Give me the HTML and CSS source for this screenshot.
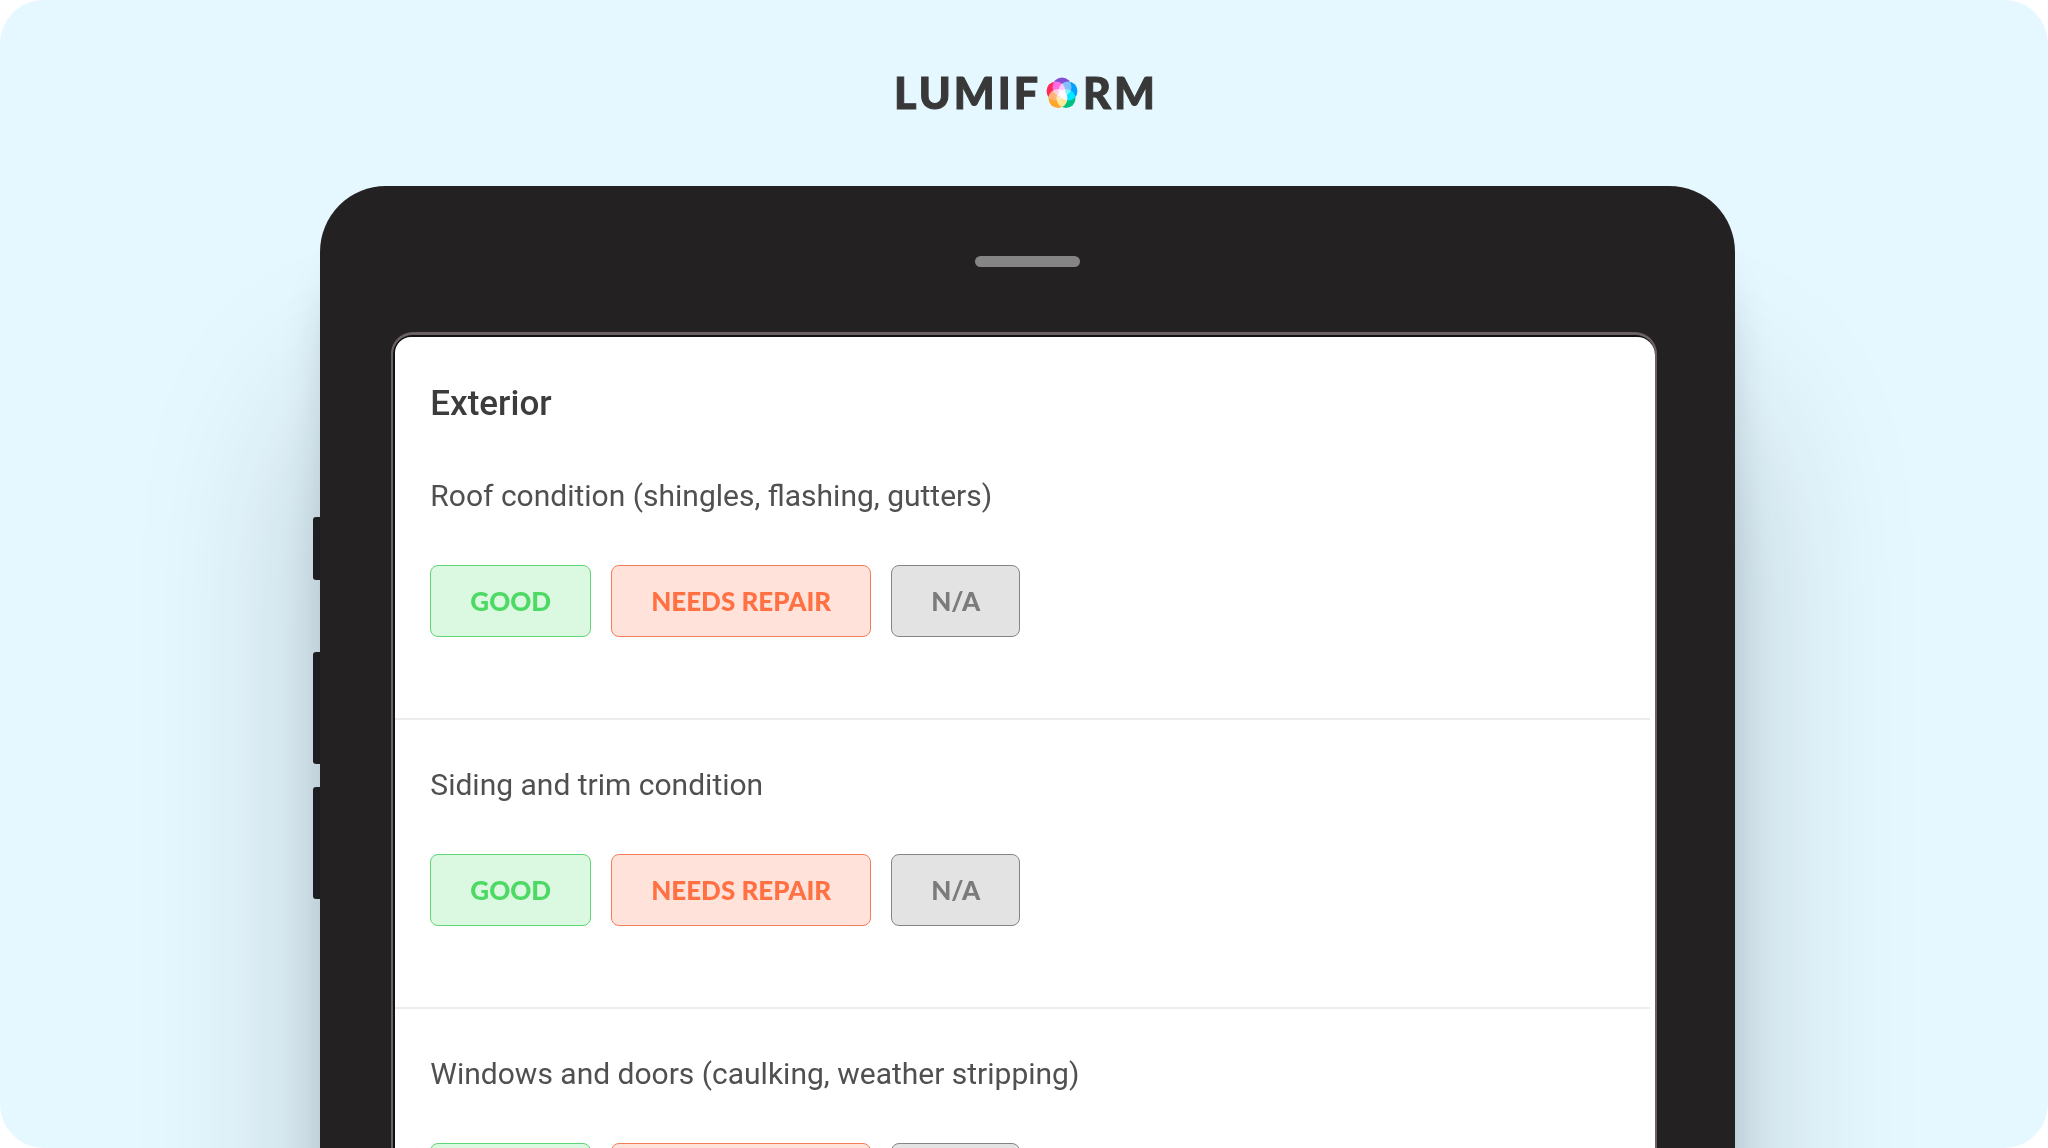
FILE: index.html
```html
<!DOCTYPE html>
<html lang="en">
<head>
<meta charset="utf-8">
<meta name="viewport" content="width=device-width, initial-scale=1">
<title>Lumiform</title>
<link rel="stylesheet" href="styles.css">
</head>
<body>
<div class="canvas">
  <header class="brand">
    <span class="brand-text">LUMIF</span>
    <svg class="brand-mark" viewBox="0 0 64 64" role="img" aria-label="O">
      <g class="petals">
        <circle cx="32" cy="20" r="19" fill="#8350d2"/>
        <circle cx="44" cy="28" r="19" fill="#00a2ff"/>
        <circle cx="40" cy="43" r="19" fill="#00c084"/>
        <circle cx="24" cy="43" r="19" fill="#ffa62b"/>
        <circle cx="20" cy="28" r="19" fill="#ff2a5c"/>
      </g>
    </svg>
    <span class="brand-text">RM</span>
  </header>
  <div class="device">
    <div class="keys">
      <span class="key key-short"></span>
      <span class="key key-volume-up"></span>
      <span class="key"></span>
    </div>
    <div class="tablet">
      <div class="speaker"></div>
      <main class="screen">
        <div class="sheet">
          <h1 class="title">Exterior</h1>
          <section class="item">
            <h2 class="question">Roof condition (shingles, flashing, gutters)</h2>
            <div class="answers">
              <button type="button" class="answer good">GOOD</button>
              <button type="button" class="answer repair">NEEDS REPAIR</button>
              <button type="button" class="answer na">N/A</button>
            </div>
          </section>
          <section class="item">
            <h2 class="question">Siding and trim condition</h2>
            <div class="answers">
              <button type="button" class="answer good">GOOD</button>
              <button type="button" class="answer repair">NEEDS REPAIR</button>
              <button type="button" class="answer na">N/A</button>
            </div>
          </section>
          <section class="item">
            <h2 class="question">Windows and doors (caulking, weather stripping)</h2>
            <div class="answers">
              <button type="button" class="answer good">GOOD</button>
              <button type="button" class="answer repair">NEEDS REPAIR</button>
              <button type="button" class="answer na">N/A</button>
            </div>
          </section>
        </div>
      </main>
    </div>
  </div>
</div>
</body>
</html>
```
FILE: styles.css
```css
* {
  box-sizing: border-box;
}

body {
  margin: 0;
  background: #fff;
  font-family: Roboto, "Liberation Sans", sans-serif;
  color: #3c3c3c;
}

.canvas {
  height: 100vh;
  overflow-x: hidden;
  overflow-y: auto;
  scrollbar-width: none;
  border-radius: 44px;
  background: #e6f8ff;
}

.brand {
  display: flex;
  justify-content: center;
  align-items: center;
  gap: 5px;
  height: 186px;
  padding: 0 0 1px 4px;
}

.brand-text {
  font-family: Lato, "Open Sans", sans-serif;
  font-size: 43px;
  font-weight: 900;
  line-height: 48px;
  letter-spacing: 3px;
  color: #383838;
  -webkit-text-stroke: 1px #383838;
}

.brand-mark {
  width: 32px;
  height: 32px;
}

.petals {
  isolation: isolate;
}

.petals circle {
  mix-blend-mode: screen;
}

.device {
  display: flex;
  width: 69.4%;
  margin: 0 auto;
}

.keys {
  display: flex;
  flex-direction: column;
  flex: 0 0 7px;
  gap: 23px;
  padding-top: 331px;
}

.key {
  height: 112px;
  border-radius: 3px 0 0 3px;
  background: #242122;
}

.key-short {
  height: 63px;
}

.key-volume-up {
  margin-top: 49px;
}

.tablet {
  flex: 1;
  padding: 70px 0 80px;
  border-radius: 66px 66px 0 0;
  background: #242122;
  box-shadow: 0 220px 180px rgba(0, 20, 30, 0.22), 0 75px 50px -16px rgba(0, 20, 30, 0.25);
}

.speaker {
  width: 105px;
  height: 11px;
  margin: 0 auto 65px;
  border-radius: 6px;
  background: #858585;
}

.screen {
  margin: 0 78px 0 71px;
  padding: 2px 0 0 2px;
  border: 3px solid #6b6163;
  border-width: 3px 2px;
  border-radius: 22px 22px 0 0;
  background: #111;
}

.sheet {
  padding-top: 47px;
  border-radius: 16px 18px 0 0;
  background: #fff;
}

.title {
  margin: 0;
  padding: 0 35px 7px;
  font-size: 35px;
  font-weight: 500;
  line-height: 40px;
}

.item {
  margin-right: 5px;
  padding: 47px 35px 81px;
  border-bottom: 2px solid #ececec;
}

.question {
  margin: 0 0 51px;
  font-size: 30px;
  font-weight: 400;
  line-height: 36px;
  color: #505050;
}

.answers {
  display: flex;
  gap: 20px;
}

.answer {
  height: 72px;
  padding: 0 39px;
  border: 1px solid;
  border-radius: 8px;
  font-family: Lato, "Open Sans", sans-serif;
  font-size: 26px;
  font-weight: 900;
  line-height: 32px;
}

.good {
  border-color: #5fd576;
  background: #dbf8e0;
  color: #4cd964;
}

.repair {
  border-color: #f27d58;
  background: #ffe2da;
  color: #ff7043;
}

.na {
  border-color: #858585;
  background: #e3e3e3;
  color: #7b7b7b;
}
```
